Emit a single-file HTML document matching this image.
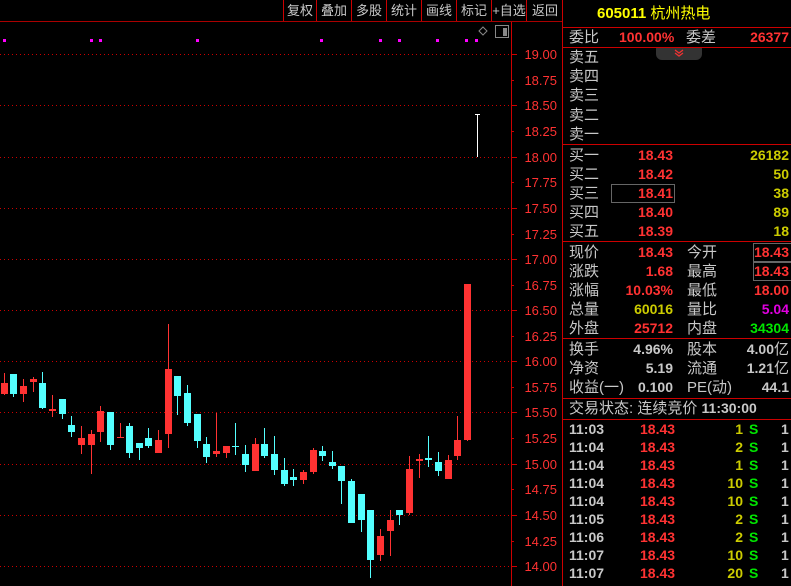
<!DOCTYPE html>
<html><head><meta charset="utf-8"><style>
*{margin:0;padding:0;box-sizing:border-box}
body{width:791px;height:586px;background:#000;overflow:hidden;position:relative;font-family:"Liberation Sans","Noto Sans CJK SC",sans-serif;}
.btn{position:absolute;top:0;height:21px;border-left:1px solid #c00;color:#c8c8c8;font-size:13px;line-height:22px;text-align:center}
.t{position:absolute;font-size:15px;line-height:19px;white-space:nowrap}
.g{color:#c8c8c8}
.r{color:#ff3232;font-weight:bold}
.y{color:#cccc00;font-weight:bold}
.gr{color:#00e600;font-weight:bold}
.m{color:#e000e0;font-weight:bold}
.w{color:#c8c8c8;font-weight:bold}
.hl{position:absolute;left:563px;width:228px;height:1px;background:#c00}
.num{font-size:14px;font-family:"Liberation Sans",sans-serif}
</style></head><body>
<div style="position:absolute;left:0;top:21px;width:563px;height:1px;background:#a00"></div>
<div class="btn" style="left:283px;width:33px">复权</div>
<div class="btn" style="left:316px;width:35px">叠加</div>
<div class="btn" style="left:351px;width:35px">多股</div>
<div class="btn" style="left:386px;width:35px">统计</div>
<div class="btn" style="left:421px;width:35px">画线</div>
<div class="btn" style="left:456px;width:35px">标记</div>
<div class="btn" style="left:491px;width:35px">+自选</div>
<div class="btn" style="left:526px;width:37px">返回</div>
<div style="position:absolute;left:562px;top:0;width:1px;height:586px;background:#c00"></div>

<svg style="position:absolute;left:0;top:0" width="563" height="586">
<g fill="#f0f">
<rect x="3" y="39" width="3" height="3"/><rect x="90" y="39" width="3" height="3"/><rect x="99" y="39" width="3" height="3"/><rect x="196" y="39" width="3" height="3"/><rect x="320" y="39" width="3" height="3"/><rect x="379" y="39" width="3" height="3"/><rect x="398" y="39" width="3" height="3"/><rect x="436" y="39" width="3" height="3"/><rect x="465" y="39" width="3" height="3"/><rect x="475" y="39" width="3" height="3"/>
</g>
<path d="M483 27 l4 4 -4 4 -4 -4z" fill="none" stroke="#888"/>
<rect x="495.5" y="25.5" width="13" height="12" fill="none" stroke="#888"/><rect x="503" y="28" width="4" height="8" fill="#888"/>
<g stroke="#c00" stroke-dasharray="1 3">
<line x1="0" x2="511" y1="54.5" y2="54.5"/><line x1="0" x2="511" y1="105.5" y2="105.5"/><line x1="0" x2="511" y1="157.5" y2="157.5"/><line x1="0" x2="511" y1="208.5" y2="208.5"/><line x1="0" x2="511" y1="259.5" y2="259.5"/><line x1="0" x2="511" y1="310.5" y2="310.5"/><line x1="0" x2="511" y1="361.5" y2="361.5"/><line x1="0" x2="511" y1="412.5" y2="412.5"/><line x1="0" x2="511" y1="464.5" y2="464.5"/><line x1="0" x2="511" y1="515.5" y2="515.5"/><line x1="0" x2="511" y1="566.5" y2="566.5"/>
</g>
<line x1="511.5" x2="511.5" y1="22" y2="586" stroke="#c00"/>
<g stroke="#c00">
<path d="M511 54.5h6M511 80.5h3M511 105.5h6M511 131.5h3M511 157.5h6M511 182.5h3M511 208.5h6M511 234.5h3M511 259.5h6M511 285.5h3M511 310.5h6M511 336.5h3M511 361.5h6M511 387.5h3M511 412.5h6M511 438.5h3M511 464.5h6M511 489.5h3M511 515.5h6M511 541.5h3M511 566.5h6"/>
</g>
<g fill="#ff3232" font-size="13" font-family="Liberation Sans" text-anchor="end">
<text x="557" y="59">19.00</text><text x="557" y="85">18.75</text><text x="557" y="110">18.50</text><text x="557" y="136">18.25</text><text x="557" y="162">18.00</text><text x="557" y="187">17.75</text><text x="557" y="213">17.50</text><text x="557" y="239">17.25</text><text x="557" y="264">17.00</text><text x="557" y="290">16.75</text><text x="557" y="315">16.50</text><text x="557" y="341">16.25</text><text x="557" y="366">16.00</text><text x="557" y="392">15.75</text><text x="557" y="417">15.50</text><text x="557" y="443">15.25</text><text x="557" y="469">15.00</text><text x="557" y="494">14.75</text><text x="557" y="520">14.50</text><text x="557" y="546">14.25</text><text x="557" y="571">14.00</text>
</g>
<path d="M477.5 114v43M475 114.5h5" stroke="#fff"/>
<g stroke="#ff3232" fill="#ff3232">
<line x1="4.5" x2="4.5" y1="373" y2="395"/><rect x="1" y="383" width="7" height="11" stroke="none"/>
<line x1="23.5" x2="23.5" y1="379" y2="402"/><rect x="20" y="386" width="7" height="8" stroke="none"/>
<line x1="33.5" x2="33.5" y1="377" y2="392"/><rect x="30" y="379" width="7" height="3" stroke="none"/>
<line x1="52.5" x2="52.5" y1="395" y2="417"/><rect x="49" y="409" width="7" height="2" stroke="none"/>
<line x1="81.5" x2="81.5" y1="426" y2="454"/><rect x="78" y="438" width="7" height="7" stroke="none"/>
<line x1="91.5" x2="91.5" y1="430" y2="474"/><rect x="88" y="434" width="7" height="11" stroke="none"/>
<line x1="100.5" x2="100.5" y1="406" y2="442"/><rect x="97" y="411" width="7" height="21" stroke="none"/>
<line x1="120.5" x2="120.5" y1="423" y2="438"/><rect x="117" y="437" width="7" height="1" stroke="none"/>
<line x1="158.5" x2="158.5" y1="430" y2="448"/><rect x="155" y="440" width="7" height="13" stroke="none"/>
<line x1="168.5" x2="168.5" y1="324" y2="448"/><rect x="165" y="369" width="7" height="65" stroke="none"/>
<line x1="216.5" x2="216.5" y1="413" y2="457"/><rect x="213" y="451" width="7" height="3" stroke="none"/>
<line x1="226.5" x2="226.5" y1="446" y2="458"/><rect x="223" y="446" width="7" height="7" stroke="none"/>
<line x1="255.5" x2="255.5" y1="438" y2="471"/><rect x="252" y="444" width="7" height="27" stroke="none"/>
<line x1="303.5" x2="303.5" y1="470" y2="484"/><rect x="300" y="472" width="7" height="8" stroke="none"/>
<line x1="313.5" x2="313.5" y1="448" y2="474"/><rect x="310" y="450" width="7" height="22" stroke="none"/>
<line x1="380.5" x2="380.5" y1="529" y2="561"/><rect x="377" y="536" width="7" height="19" stroke="none"/>
<line x1="390.5" x2="390.5" y1="510" y2="556"/><rect x="387" y="520" width="7" height="11" stroke="none"/>
<line x1="409.5" x2="409.5" y1="456" y2="515"/><rect x="406" y="469" width="7" height="44" stroke="none"/>
<line x1="419.5" x2="419.5" y1="454" y2="478"/><rect x="416" y="459" width="7" height="2" stroke="none"/>
<line x1="448.5" x2="448.5" y1="455" y2="479"/><rect x="445" y="460" width="7" height="19" stroke="none"/>
<line x1="457.5" x2="457.5" y1="416" y2="460"/><rect x="454" y="440" width="7" height="16" stroke="none"/>
<line x1="467.5" x2="467.5" y1="284" y2="441"/><rect x="464" y="284" width="7" height="156" stroke="none"/>
</g>
<g stroke="#54ffff" fill="#54ffff">
<line x1="13.5" x2="13.5" y1="374" y2="397"/><rect x="10" y="374" width="7" height="20" stroke="none"/>
<line x1="42.5" x2="42.5" y1="372" y2="409"/><rect x="39" y="383" width="7" height="25" stroke="none"/>
<line x1="62.5" x2="62.5" y1="399" y2="419"/><rect x="59" y="399" width="7" height="15" stroke="none"/>
<line x1="71.5" x2="71.5" y1="416" y2="437"/><rect x="68" y="425" width="7" height="7" stroke="none"/>
<line x1="110.5" x2="110.5" y1="412" y2="450"/><rect x="107" y="412" width="7" height="33" stroke="none"/>
<line x1="129.5" x2="129.5" y1="423" y2="458"/><rect x="126" y="426" width="7" height="27" stroke="none"/>
<line x1="139.5" x2="139.5" y1="443" y2="460"/><rect x="136" y="443" width="7" height="5" stroke="none"/>
<line x1="148.5" x2="148.5" y1="428" y2="448"/><rect x="145" y="438" width="7" height="8" stroke="none"/>
<line x1="177.5" x2="177.5" y1="376" y2="415"/><rect x="174" y="376" width="7" height="20" stroke="none"/>
<line x1="187.5" x2="187.5" y1="385" y2="426"/><rect x="184" y="393" width="7" height="30" stroke="none"/>
<line x1="197.5" x2="197.5" y1="414" y2="448"/><rect x="194" y="414" width="7" height="27" stroke="none"/>
<line x1="206.5" x2="206.5" y1="437" y2="463"/><rect x="203" y="444" width="7" height="13" stroke="none"/>
<line x1="235.5" x2="235.5" y1="423" y2="455"/><rect x="232" y="446" width="7" height="1" stroke="none"/>
<line x1="245.5" x2="245.5" y1="445" y2="472"/><rect x="242" y="454" width="7" height="11" stroke="none"/>
<line x1="264.5" x2="264.5" y1="428" y2="458"/><rect x="261" y="444" width="7" height="12" stroke="none"/>
<line x1="274.5" x2="274.5" y1="436" y2="475"/><rect x="271" y="454" width="7" height="16" stroke="none"/>
<line x1="284.5" x2="284.5" y1="458" y2="486"/><rect x="281" y="470" width="7" height="14" stroke="none"/>
<line x1="293.5" x2="293.5" y1="469" y2="486"/><rect x="290" y="477" width="7" height="3" stroke="none"/>
<line x1="322.5" x2="322.5" y1="446" y2="461"/><rect x="319" y="451" width="7" height="5" stroke="none"/>
<line x1="332.5" x2="332.5" y1="451" y2="469"/><rect x="329" y="462" width="7" height="4" stroke="none"/>
<line x1="341.5" x2="341.5" y1="466" y2="504"/><rect x="338" y="466" width="7" height="15" stroke="none"/>
<line x1="351.5" x2="351.5" y1="479" y2="523"/><rect x="348" y="481" width="7" height="42" stroke="none"/>
<line x1="361.5" x2="361.5" y1="494" y2="532"/><rect x="358" y="494" width="7" height="26" stroke="none"/>
<line x1="370.5" x2="370.5" y1="510" y2="578"/><rect x="367" y="510" width="7" height="50" stroke="none"/>
<line x1="399.5" x2="399.5" y1="510" y2="525"/><rect x="396" y="510" width="7" height="5" stroke="none"/>
<line x1="428.5" x2="428.5" y1="436" y2="467"/><rect x="425" y="458" width="7" height="2" stroke="none"/>
<line x1="438.5" x2="438.5" y1="452" y2="476"/><rect x="435" y="462" width="7" height="9" stroke="none"/>
</g>
</svg>

<!-- right panel -->
<div class="t" style="left:597px;top:4px;color:#ffff00;font-size:15px"><b>605011</b> 杭州热电</div>
<div class="hl" style="top:27px"></div>
<div class="t g" style="left:569px;top:28px">委比</div>
<div class="t r num" style="left:619px;top:28px">100.00%</div>
<div class="t g" style="left:686px;top:28px">委差</div>
<div class="t r num" style="right:2px;top:28px">26377</div>
<div class="hl" style="top:47px"></div>
<div style="position:absolute;left:656px;top:48px;width:46px;height:12px;background:#333;border-radius:0 0 6px 6px"></div>
<svg style="position:absolute;left:673px;top:49px" width="12" height="9"><path d="M2 1l4 3 4-3M2 4l4 3 4-3" stroke="#e33" fill="none" stroke-width="1.3"/></svg>
<div class="t g" style="left:569px;top:48px">卖五</div>
<div class="t g" style="left:569px;top:67px">卖四</div>
<div class="t g" style="left:569px;top:86px">卖三</div>
<div class="t g" style="left:569px;top:106px">卖二</div>
<div class="t g" style="left:569px;top:125px">卖一</div>
<div class="hl" style="top:144px"></div>

<div class="t g" style="left:569px;top:146px">买一</div><div class="t r num" style="right:118px;top:146px">18.43</div><div class="t y num" style="right:2px;top:146px">26182</div>
<div class="t g" style="left:569px;top:165px">买二</div><div class="t r num" style="right:118px;top:165px">18.42</div><div class="t y num" style="right:2px;top:165px">50</div>
<div class="t g" style="left:569px;top:184px">买三</div><div class="t r num" style="right:118px;top:184px">18.41</div><div class="t y num" style="right:2px;top:184px">38</div>
<div style="position:absolute;left:611px;top:184px;width:64px;height:19px;border:1px solid #666"></div>
<div class="t g" style="left:569px;top:203px">买四</div><div class="t r num" style="right:118px;top:203px">18.40</div><div class="t y num" style="right:2px;top:203px">89</div>
<div class="t g" style="left:569px;top:222px">买五</div><div class="t r num" style="right:118px;top:222px">18.39</div><div class="t y num" style="right:2px;top:222px">18</div>
<div class="hl" style="top:241px"></div>

<div class="t g" style="left:569px;top:243px">现价</div><div class="t r num" style="right:118px;top:243px">18.43</div><div class="t g" style="left:687px;top:243px">今开</div><div class="t r num" style="right:2px;top:243px">18.43</div>
<div style="position:absolute;left:753px;top:243px;width:40px;height:19px;border:1px solid #666"></div>
<div class="t g" style="left:569px;top:262px">涨跌</div><div class="t r num" style="right:118px;top:262px">1.68</div><div class="t g" style="left:687px;top:262px">最高</div><div class="t r num" style="right:2px;top:262px">18.43</div>
<div style="position:absolute;left:753px;top:262px;width:40px;height:19px;border:1px solid #666"></div>
<div class="t g" style="left:569px;top:281px">涨幅</div><div class="t r num" style="right:118px;top:281px">10.03%</div><div class="t g" style="left:687px;top:281px">最低</div><div class="t r num" style="right:2px;top:281px">18.00</div>
<div class="t g" style="left:569px;top:300px">总量</div><div class="t y num" style="right:118px;top:300px">60016</div><div class="t g" style="left:687px;top:300px">量比</div><div class="t m num" style="right:2px;top:300px">5.04</div>
<div class="t g" style="left:569px;top:319px">外盘</div><div class="t r num" style="right:118px;top:319px">25712</div><div class="t g" style="left:687px;top:319px">内盘</div><div class="t gr num" style="right:2px;top:319px">34304</div>
<div class="hl" style="top:338px"></div>

<div class="t g" style="left:569px;top:340px">换手</div><div class="t w num" style="right:118px;top:340px">4.96%</div><div class="t g" style="left:687px;top:340px">股本</div><div class="t w num" style="right:2px;top:340px">4.00<span style="font-weight:normal;font-size:15px">亿</span></div>
<div class="t g" style="left:569px;top:359px">净资</div><div class="t w num" style="right:118px;top:359px">5.19</div><div class="t g" style="left:687px;top:359px">流通</div><div class="t w num" style="right:2px;top:359px">1.21<span style="font-weight:normal;font-size:15px">亿</span></div>
<div class="t g" style="left:569px;top:378px">收益(一)</div><div class="t w num" style="right:118px;top:378px">0.100</div><div class="t g" style="left:687px;top:378px">PE(动)</div><div class="t w num" style="right:2px;top:378px">44.1</div>
<div class="hl" style="top:398px"></div>
<div class="t g" style="left:569px;top:399px">交易状态: 连续竞价 <b class="num">11:30:00</b></div>
<div class="hl" style="top:419px"></div>

<div style="position:absolute;left:569px;top:420px;width:222px;font-size:14px;font-weight:bold;line-height:18px;font-family:'Liberation Sans',sans-serif">
<div style="position:relative;height:18px"><span class="w" style="position:absolute;left:0">11:03</span><span class="r" style="position:absolute;left:71px">18.43</span><span class="y" style="position:absolute;right:48px">1</span><span class="gr" style="position:absolute;left:180px">S</span><span class="w" style="position:absolute;left:212px">1</span></div>
<div style="position:relative;height:18px"><span class="w" style="position:absolute;left:0">11:04</span><span class="r" style="position:absolute;left:71px">18.43</span><span class="y" style="position:absolute;right:48px">2</span><span class="gr" style="position:absolute;left:180px">S</span><span class="w" style="position:absolute;left:212px">1</span></div>
<div style="position:relative;height:18px"><span class="w" style="position:absolute;left:0">11:04</span><span class="r" style="position:absolute;left:71px">18.43</span><span class="y" style="position:absolute;right:48px">1</span><span class="gr" style="position:absolute;left:180px">S</span><span class="w" style="position:absolute;left:212px">1</span></div>
<div style="position:relative;height:18px"><span class="w" style="position:absolute;left:0">11:04</span><span class="r" style="position:absolute;left:71px">18.43</span><span class="y" style="position:absolute;right:48px">10</span><span class="gr" style="position:absolute;left:180px">S</span><span class="w" style="position:absolute;left:212px">1</span></div>
<div style="position:relative;height:18px"><span class="w" style="position:absolute;left:0">11:04</span><span class="r" style="position:absolute;left:71px">18.43</span><span class="y" style="position:absolute;right:48px">10</span><span class="gr" style="position:absolute;left:180px">S</span><span class="w" style="position:absolute;left:212px">1</span></div>
<div style="position:relative;height:18px"><span class="w" style="position:absolute;left:0">11:05</span><span class="r" style="position:absolute;left:71px">18.43</span><span class="y" style="position:absolute;right:48px">2</span><span class="gr" style="position:absolute;left:180px">S</span><span class="w" style="position:absolute;left:212px">1</span></div>
<div style="position:relative;height:18px"><span class="w" style="position:absolute;left:0">11:06</span><span class="r" style="position:absolute;left:71px">18.43</span><span class="y" style="position:absolute;right:48px">2</span><span class="gr" style="position:absolute;left:180px">S</span><span class="w" style="position:absolute;left:212px">1</span></div>
<div style="position:relative;height:18px"><span class="w" style="position:absolute;left:0">11:07</span><span class="r" style="position:absolute;left:71px">18.43</span><span class="y" style="position:absolute;right:48px">10</span><span class="gr" style="position:absolute;left:180px">S</span><span class="w" style="position:absolute;left:212px">1</span></div>
<div style="position:relative;height:18px"><span class="w" style="position:absolute;left:0">11:07</span><span class="r" style="position:absolute;left:71px">18.43</span><span class="y" style="position:absolute;right:48px">20</span><span class="gr" style="position:absolute;left:180px">S</span><span class="w" style="position:absolute;left:212px">1</span></div>
</div>
</body></html>
